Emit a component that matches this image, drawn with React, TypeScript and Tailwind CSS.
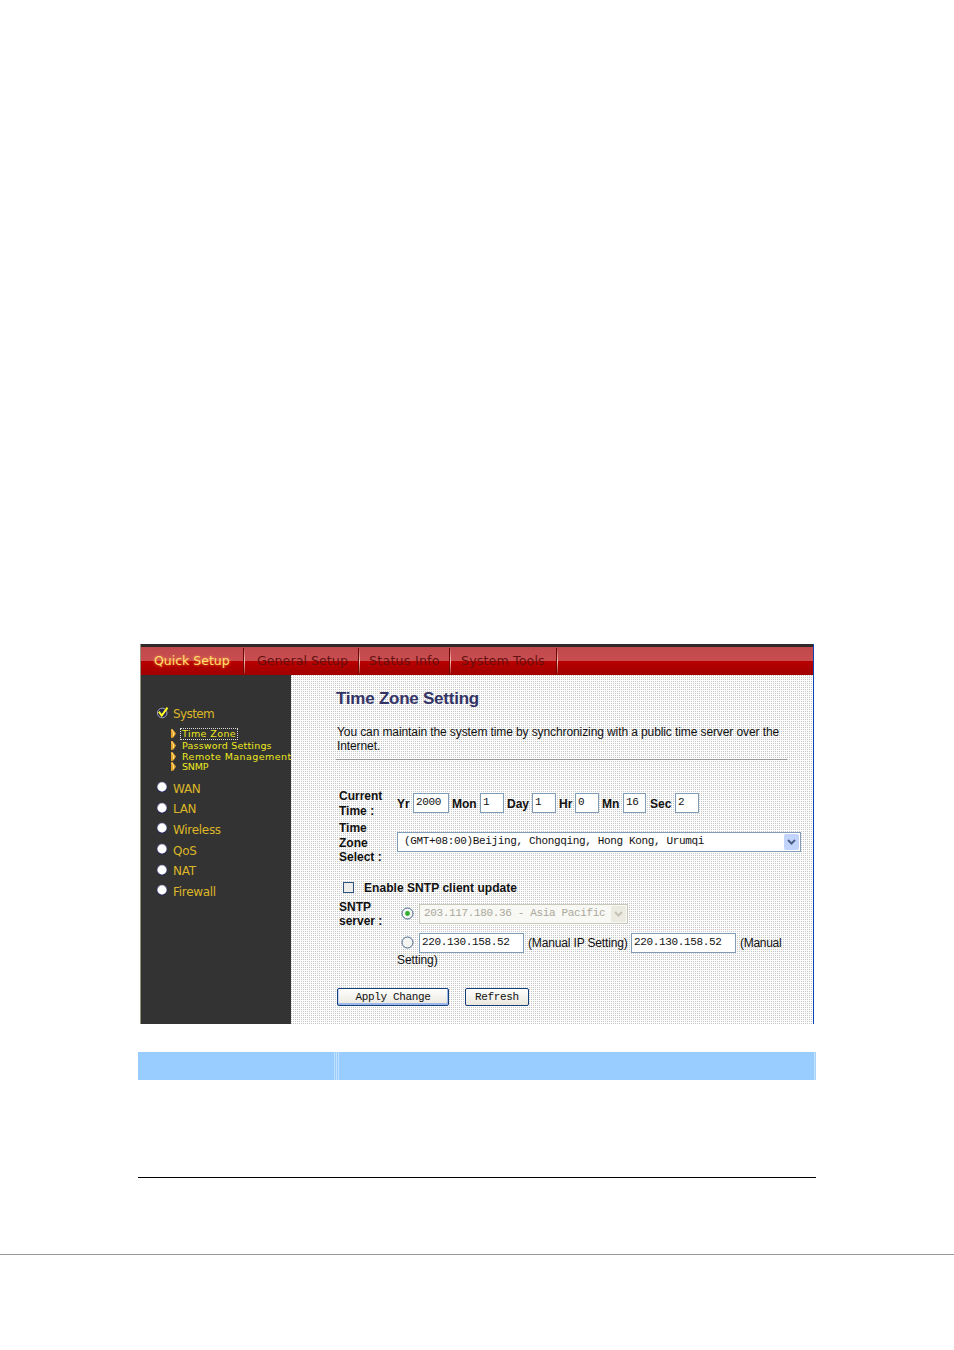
import React from "react";
import clsx from "clsx";

type NavTab = { label: string; cell: string; text: string; active?: boolean };

const tabs: NavTab[] = [
  { label: "Quick Setup", cell: "w-[104px] pl-[13px]", text: "tracking-[0px]", active: true },
  { label: "General Setup", cell: "w-[115px] pl-[12px]", text: "tracking-[0.1px]" },
  { label: "Status Info", cell: "w-[91px] pl-[9px]", text: "tracking-[0.3px]" },
  { label: "System Tools", cell: "w-[107px] pl-[10px]", text: "tracking-[0.2px]" },
];

const systemLinks = [
  { label: "Time Zone", row: "h-[12px]", text: "tracking-[0.4px]", focused: true },
  { label: "Password Settings", row: "h-[12px]", text: "tracking-[0.2px]" },
  { label: "Remote Management", row: "h-[10px]", text: "tracking-[0.43px]" },
  { label: "SNMP", row: "h-[10px]", text: "tracking-[-0.2px]" },
];

const sections = ["WAN", "LAN", "Wireless", "QoS", "NAT", "Firewall"];

const timeFields = [
  { label: "Yr", value: "2000", labelWidth: "w-[16px]", width: "w-[36px]" },
  { label: "Mon", value: "1", labelWidth: "w-[28px]", width: "w-[24px]" },
  { label: "Day", value: "1", labelWidth: "w-[25px]", width: "w-[24px]" },
  { label: "Hr", value: "0", labelWidth: "w-[16px]", width: "w-[24px]" },
  { label: "Mn", value: "16", labelWidth: "w-[21px]", width: "w-[23px]" },
  { label: "Sec", value: "2", labelWidth: "w-[26px] pl-px", width: "w-[24px]" },
];

const mono = "font-['Liberation_Mono',monospace] text-[11px] tracking-[-0.35px]";

function SectionBullet() {
  return (
    <svg width="12" height="12" viewBox="0 0 12 12" className="shrink-0">
      <circle cx="6" cy="6" r="5.2" fill="#151570" />
      <circle cx="6" cy="5.7" r="5" fill="#8c8ca8" />
      <circle cx="6" cy="6" r="4.4" fill="#fff" />
    </svg>
  );
}

function CheckedBullet() {
  return (
    <svg width="14" height="14" viewBox="0 0 14 14" className="shrink-0">
      <circle cx="6.2" cy="7" r="4.8" fill="#24244c" stroke="#a4a4b8" strokeWidth="1" />
      <path d="M2.8 5.7 5.7 9.5 11.5 1.7" fill="none" stroke="#ffff20" strokeWidth="2" />
    </svg>
  );
}

function LinkArrow() {
  return (
    <svg width="5" height="9" viewBox="0 0 5 9" className="-mt-px shrink-0">
      <path d="M0 0H1.5L5 4.5 2.5 8.5 0 9Z" fill="#e5a52c" />
      <path d="M1 1 2.5 3.5V7" fill="none" stroke="#ffe08a" strokeWidth="1" />
    </svg>
  );
}

function Radio({ checked }: { checked?: boolean }) {
  return (
    <svg width="13" height="13" viewBox="0 0 13 13" className="shrink-0">
      <circle cx="6.5" cy="6.5" r="5.5" fill="#f4f4f0" stroke="#41658a" />
      {checked && <circle cx="6.5" cy="6.5" r="2.4" fill="#2fae2f" />}
    </svg>
  );
}

function TextField({ value, className }: { value: string; className?: string }) {
  return (
    <div className={clsx("h-[20px] shrink-0 border border-[#7f9db9] bg-white pl-[2px] leading-[16px] whitespace-pre text-[#111]", mono, className)}>
      {value}
    </div>
  );
}

function SelectBox({ value, disabled, className }: { value: string; disabled?: boolean; className?: string }) {
  return (
    <div
      className={clsx(
        "flex h-[20px] shrink-0 items-center justify-between border pr-[1px]",
        disabled ? "border-[#c9c7ba] bg-[#f8f8f4] pl-[4px] text-[#aaa89b]" : "border-[#7f9db9] bg-white pl-[6px] text-[#111]",
        className
      )}
    >
      <span className={clsx("-mt-px whitespace-pre", mono)}>{value}</span>
      <span className={clsx("flex h-[16px] w-[15px] items-center justify-center rounded-[2px]", disabled ? "bg-[#ecebe2]" : "bg-[#c2d3fc]")}>
        <svg width="9" height="6" viewBox="0 0 9 6">
          <path d="M1 1 4.5 4.5 8 1" fill="none" stroke={disabled ? "#c5c3b5" : "#4d6185"} strokeWidth="2" />
        </svg>
      </span>
    </div>
  );
}

function Sidebar() {
  return (
    <aside className="w-[150px] shrink-0 overflow-hidden bg-[#333] pt-[28px] font-['DejaVu_Sans',Verdana,sans-serif] text-[#dcb628]">
      <div className="flex h-[20px] items-center pl-[15px] text-[12px]">
        <CheckedBullet />
        <span className="ml-[3px] mt-[1px] tracking-[-0.6px]">System</span>
      </div>
      <div className="pt-[5px] pl-[30px] text-[9.5px] text-[#eee820]">
        {systemLinks.map((link) => (
          <div key={link.label} className={clsx("flex items-center", link.row)}>
            <LinkArrow />
            <span
              className={clsx(
                "ml-[5px] px-px leading-[10px] whitespace-nowrap",
                link.text,
                link.focused && "outline-1 outline-dotted outline-[#ddd]"
              )}
            >
              {link.label}
            </span>
          </div>
        ))}
      </div>
      <div className="pt-[5px] text-[12px]">
        {sections.map((name) => (
          <div key={name} className="flex h-[20.6px] items-center pl-[15px]">
            <SectionBullet />
            <span className="ml-[5px] mt-[3px] tracking-[-0.3px]">{name}</span>
          </div>
        ))}
      </div>
    </aside>
  );
}

function TimeZoneForm() {
  return (
    <main className="w-[522px] bg-white bg-[conic-gradient(at_1px_1px,#fdfdfd_270deg,#c6c6c6_270deg)] bg-[length:2px_2px] pl-[45px] font-['Liberation_Sans',Arial,sans-serif] text-[12px] leading-[14.5px] whitespace-nowrap text-[#111]">
      <h1 className="pt-[13px] text-[17px] leading-[22px] font-bold tracking-[-0.24px] text-[#333366]">Time Zone Setting</h1>
      <p className="h-[50px] w-[451px] border-b border-[#999] pt-[15px] pl-px leading-[14px] tracking-[-0.1px]">
        You can maintain the system time by synchronizing with a public time server over the
        <br />
        Internet.
      </p>

      <div className="mt-[29px] flex h-[32px] pl-[3px] font-bold">
        <div className="w-[58px]">
          Current
          <br />
          Time :
        </div>
        <div className="mt-[4px] flex h-[20px]">
          {timeFields.map((field) => (
            <React.Fragment key={field.label}>
              <span className={clsx("mt-[4px] shrink-0", field.labelWidth)}>{field.label}</span>
              <TextField value={field.value} className={clsx("mr-[3px] font-normal", field.width)} />
            </React.Fragment>
          ))}
        </div>
      </div>

      <div className="flex h-[61px] pl-[3px] font-bold">
        <div className="w-[58px]">
          Time
          <br />
          Zone
          <br />
          Select :
        </div>
        <SelectBox value="(GMT+08:00)Beijing, Chongqing, Hong Kong, Urumqi" className="mt-[11px] w-[404px] font-normal" />
      </div>

      <div className="flex h-[18px] pl-[7px] font-bold">
        <span className="h-[11px] w-[11px] border border-[#2c5380] bg-[#ededea]" />
        <span className="-mt-px ml-[10px] tracking-[0.05px]">Enable SNTP client update</span>
      </div>

      <div className="flex h-[88px] pl-[3px]">
        <div className="w-[58px] leading-[14px] font-bold">
          SNTP
          <br />
          server :
        </div>
        <div>
          <div className="flex h-[29px] items-start pl-[4px]">
            <span className="mt-[7px] mr-[5px]">
              <Radio checked />
            </span>
            <SelectBox value="203.117.180.36 - Asia Pacific" disabled className="mt-[4px] w-[209px]" />
          </div>
          <div className="flex h-[25px] items-start pl-[4px]">
            <span className="mt-[7px] mr-[5px]">
              <Radio />
            </span>
            <TextField value="220.130.158.52" className="mt-[4px] w-[105px]" />
            <span className="mt-[7px] ml-[4px] w-[103px] tracking-[-0.15px]">(Manual IP Setting)</span>
            <TextField value="220.130.158.52" className="mt-[4px] w-[105px]" />
            <span className="mt-[7px] ml-[4px] tracking-[-0.3px]">(Manual</span>
          </div>
          <div className="-mt-px tracking-[-0.1px]">Setting)</div>
        </div>
      </div>

      <div className="flex gap-[16px] pl-px">
        <button className={clsx("h-[18px] w-[112px] rounded-[2px] border border-[#123f7b] bg-linear-to-b from-white to-[#e9e7dd] leading-[14px] shadow-[inset_-1px_-2px_0_#9db7ea,inset_1px_0_0_#c4d5f5]", mono)}>
          Apply Change
        </button>
        <button className={clsx("h-[18px] w-[64px] rounded-[2px] border border-[#123f7b] bg-linear-to-b from-white to-[#e9e7dd] leading-[14px]", mono)}>
          Refresh
        </button>
      </div>
    </main>
  );
}

export default function App() {
  return (
    <div className="h-[1350px] w-[954px] overflow-hidden bg-white pt-[644px]">
      <div className="ml-[140px] flex h-[380px] w-[674px] flex-col overflow-hidden border-r border-l border-r-[#0a46b8] border-l-[#96967e] bg-[#333]">
        <nav className="flex h-[31px] shrink-0 border-t-[3px] border-[#30292a] bg-[linear-gradient(to_bottom,#c0484b_0px,#c94d50_14px,#b80000_14px,#a00000_28px)] font-['DejaVu_Sans',Verdana,sans-serif] text-[12.5px]">
          {tabs.map((tab) => (
            <div key={tab.label} className={clsx("flex shrink-0 items-center justify-between whitespace-nowrap", tab.cell)}>
              <span
                className={clsx(
                  "mt-[1px]",
                  tab.text,
                  tab.active ? "text-[#ffdf70] [text-shadow:0_0_3px_#ff9a40]" : "text-[#641010]"
                )}
              >
                {tab.label}
              </span>
              <span className="h-[26px] w-[2px] border-l border-[#6f0a0a] bg-linear-to-b from-[#c0484b] via-[#f3c0b8] to-[#b01010]" />
            </div>
          ))}
        </nav>
        <div className="flex flex-1">
          <Sidebar />
          <TimeZoneForm />
        </div>
      </div>

      <div className="mt-[28px] ml-[138px] flex h-[126px] w-[678px] items-start border-b border-black">
        <div className="h-[28px] w-[196px] bg-[#99ccff]" />
        <div className="flex h-[28px] w-[5px] justify-between bg-[#99ccff]">
          <span className="w-px bg-[#c2e0ff]" />
          <span className="w-px bg-[#c2e0ff]" />
          <span className="w-px bg-[#c2e0ff]" />
        </div>
        <div className="h-[28px] flex-1 border-r border-[#a9d4ff] bg-[#99ccff] shadow-[inset_-1px_0_0_#c2e0ff]" />
      </div>

      <div className="mt-[76px] h-px bg-[#999]" />
    </div>
  );
}
